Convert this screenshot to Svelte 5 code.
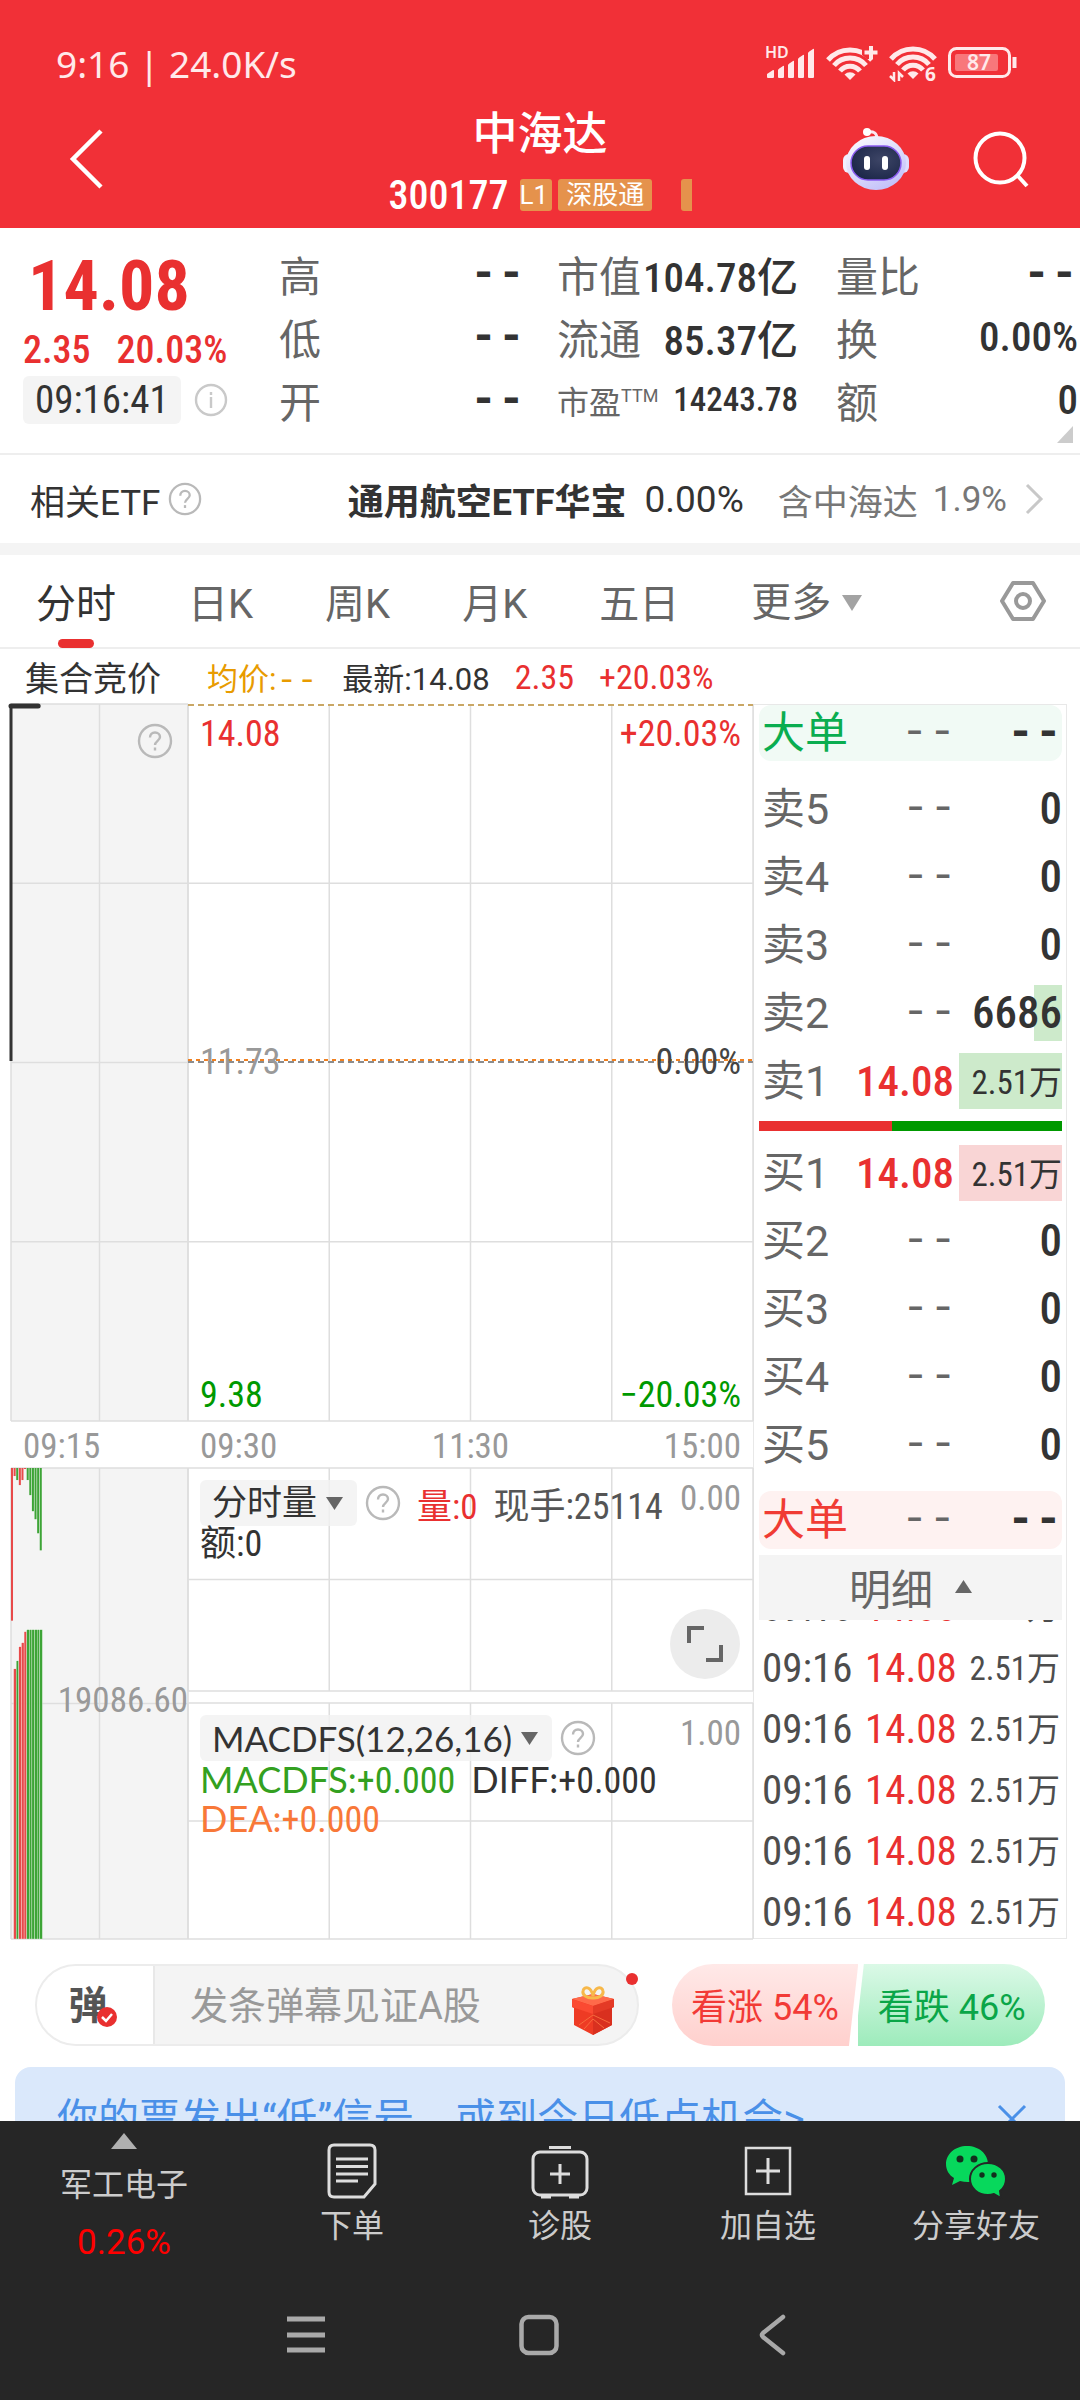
<script>
  const stats = [
    [['高', '--'], ['低', '--'], ['开', '--']],
    [['市值', '104.78亿'], ['流通', '85.37亿'], ['市盈', '14243.78', 'TTM']],
    [['量比', '--'], ['换', '0.00%'], ['额', '0']],
  ];
  const tabs = ['分时', '日K', '周K', '月K', '五日'];
  const sells = [
    { name: '卖5', price: '--', qty: '0', depth: 0 },
    { name: '卖4', price: '--', qty: '0', depth: 0 },
    { name: '卖3', price: '--', qty: '0', depth: 0 },
    { name: '卖2', price: '--', qty: '6686', depth: 27 },
    { name: '卖1', price: '14.08', qty: '2.51万', depth: 100 },
  ];
  const buys = [
    { name: '买1', price: '14.08', qty: '2.51万', depth: 100 },
    { name: '买2', price: '--', qty: '0', depth: 0 },
    { name: '买3', price: '--', qty: '0', depth: 0 },
    { name: '买4', price: '--', qty: '0', depth: 0 },
    { name: '买5', price: '--', qty: '0', depth: 0 },
  ];
  const ticks = Array.from({ length: 6 }, () => ['09:16', '14.08', '2.51万']);

  const R = '#e84a4a';
  const G = '#3da436';
  const unmatched = [[R, 152], [R, 8], [G, 12], [R, 17], [R, 12], [R, 1], [G, 12], [G, 27], [G, 43], [G, 51], [G, 65], [G, 82]];
  const matched = [[R, 201], [G, 209], [R, 223], [R, 227], [R, 238], [G, 240], [G, 240], [G, 240], [G, 240], [G, 240], [G, 240]].map(
    ([c, h]) => [c, h + 68]
  );
</script>

{#snippet lines(vs, hs)}
  <svg class="lines" viewBox="0 0 100 100" preserveAspectRatio="none" aria-hidden="true">
    {#each vs as x}<line x1={x} x2={x} y1="0" y2="100" />{/each}
    {#each hs as y}<line x1="0" x2="100" y1={y} y2={y} />{/each}
  </svg>
{/snippet}

{#snippet help(size)}
  <svg width={size} height={size} viewBox="0 0 36 36" fill="none" stroke="#b9b9b9" stroke-width="2.4" aria-hidden="true">
    <circle cx="18" cy="18" r="16" />
    <path d="M13 14.5c0-3 2-5 5-5s5 2 5 4.6c0 3.600-5 4-5 8" />
    <path d="M18 24.500v3" />
  </svg>
{/snippet}

{#snippet wifi()}
  <g fill="none" stroke="#ffe9ea" stroke-width="5">
    <path d="M2 15A29 29 0 0 1 46 15" />
    <path d="M8 20.500A21 21 0 0 1 40 20.500" />
    <path d="M14 26A13 13 0 0 1 34 26" />
  </g>
  <path d="M18.500 29.500a8 8 0 0 1 11 0L24 35z" fill="#ffe9ea" />
{/snippet}

{#snippet quotes(rows, side)}
  <table class="rows {side}">
    <tbody>
      {#each rows as row}
        <tr>
          <th scope="row">{row.name}</th>
          <td class="price" class:up={row.price !== '--'} class:dash={row.price === '--'}>{row.price}</td>
          <td class="qty" class:small={row.qty.includes('万')}>
            {#if row.depth}<i class="depth" style="width: {row.depth}%"></i>{/if}
            <span>{row.qty}</span>
          </td>
        </tr>
      {/each}
    </tbody>
  </table>
{/snippet}

<div class="app">
  <header>
    <div class="status">
      <span class="clock">9:16 | 24.0K/s</span>
      <svg class="signal" width="50" height="36" viewBox="0 0 50 36" fill="#ffe9ea" aria-hidden="true">
        <text x="0" y="13" class="hd">HD</text>
        <path d="M2 29l6-4q1-.5 1 1v6q0 1-1 1H3q-1 0-1-1zM13 25q0-1 5-4 1-.5 1 .5V32q0 1-1 1h-4q-1 0-1-1zM23 20q0-1 5-4 1-.5 1 .5V32q0 1-1 1h-4q-1 0-1-1zM33 14q0-1 5-4 1-.5 1 .5V32q0 1-1 1h-4q-1 0-1-1zM43 8q0-1 5-4 1-.5 1 .5V32q0 1-1 1h-4q-1 0-1-1z" />
      </svg>
      <svg width="52" height="36" viewBox="0 0 52 36" aria-hidden="true">
        {@render wifi()}
        <path d="M36 -2h18v16H41L36 10z" fill="#f13037" />
        <path d="M45 1v13M38.500 7.500h13" stroke="#ffe9ea" stroke-width="4" />
      </svg>
      <svg width="48" height="38" viewBox="0 0 48 38" aria-hidden="true">
        {@render wifi()}
        <path d="M0 26h14v12H0zM36 24h12v14H36z" fill="#f13037" />
        <path d="M5 28v8l-4-4M10 37v-8l4 4" fill="none" stroke="#ffe9ea" stroke-width="2.500" />
        <text x="36" y="37" class="six">6</text>
      </svg>
      <svg width="70" height="32" viewBox="0 0 70 32" aria-hidden="true">
        <rect x="1.500" y="1.500" width="60" height="28" rx="7" fill="none" stroke="#ffe9ea" stroke-width="3" />
        <rect x="7" y="7" width="43" height="17" rx="2" fill="#f8777b" />
        <path d="M66.500 10v11" stroke="#ffe9ea" stroke-width="4" />
        <text x="31" y="23" text-anchor="middle" class="charge">87</text>
      </svg>
    </div>
    <div class="titlebar">
      <button class="back" aria-label="返回">
        <svg width="40" height="60" viewBox="0 0 40 60" fill="none" stroke="#fff" stroke-width="4.500"><path d="M35 2L7 30l28 28" /></svg>
      </button>
      <div class="title">
        <h1>中海达</h1>
        <div class="code">
          <span class="num">300177</span>
          <div class="badges"><b class="cut">L1</b><b>深股通</b><b class="last"></b></div>
        </div>
      </div>
      <div class="actions">
        <button aria-label="智能助手">
          <svg width="68" height="64" viewBox="0 0 68 64">
            <defs>
              <linearGradient id="shell" x1="0" y1="0" x2="0.600" y2="1"><stop offset="0" stop-color="#fff" /><stop offset="1" stop-color="#c4c2fa" /></linearGradient>
              <radialGradient id="face" cx="0.600" cy="0.400" r="0.700"><stop offset="0" stop-color="#3d4566" /><stop offset="1" stop-color="#1a2547" /></radialGradient>
            </defs>
            <path d="M25 5c7-1 10 1 10 7" fill="none" stroke="#fbe9f2" stroke-width="3" />
            <circle cx="25" cy="5" r="4" fill="#fff" />
            <rect x="1" y="27" width="12" height="19" rx="6" fill="#f1efff" />
            <rect x="55" y="27" width="12" height="19" rx="6" fill="#dddcfd" />
            <ellipse cx="34" cy="36" rx="30" ry="27" fill="url(#shell)" />
            <rect x="9" y="19" width="50" height="34" rx="17" fill="url(#face)" stroke="#8a5cf0" stroke-width="1.500" />
            <rect x="22" y="29" width="6" height="14" rx="3" fill="#fff" />
            <rect x="40" y="29" width="6" height="14" rx="3" fill="#fff" />
          </svg>
        </button>
        <button aria-label="搜索">
          <svg width="58" height="58" viewBox="0 0 58 58" fill="none" stroke="#fff" stroke-width="4"><circle cx="28" cy="28" r="24.500" /><path d="M45 45l10 11" /></svg>
        </button>
      </div>
    </div>
  </header>

  <main>
    <section class="quote">
      <div class="last-price">
        <strong class="num">14.08</strong>
        <p class="num"><span>2.35</span><span>20.03%</span></p>
        <div class="stamp">
          <time class="num">09:16:41</time>
          <svg width="34" height="34" viewBox="0 0 34 34" fill="none" stroke="#c9c9c9" stroke-width="2.400" aria-hidden="true"><circle cx="17" cy="17" r="15" /><path d="M17 14v11M17 9v3" /></svg>
        </div>
      </div>
      {#each stats as column}
        <dl>
          {#each column as [label, value, sup]}
            <div class:compact={sup}>
              <dt>{label}{#if sup}<sup>{sup}</sup>{/if}</dt>
              <dd class="num" class:dash={value === '--'}>{value}</dd>
            </div>
          {/each}
        </dl>
      {/each}
      <i class="corner"></i>
    </section>

    <section class="etf">
      <span class="etf-label">相关ETF {@render help(34)}</span>
      <a href="#etf"><b>通用航空ETF华宝</b><span>0.00%</span><em>含中海达</em><em>1.9%</em>
        <svg width="20" height="34" viewBox="0 0 20 34" fill="none" stroke="#c8c8c8" stroke-width="3" aria-hidden="true"><path d="M3 3l14 14L3 31" /></svg>
      </a>
    </section>

    <nav class="tabs">
      {#each tabs as tab, i}
        <button class:active={i === 0}>{tab}</button>
      {/each}
      <label class="more">
        <select aria-label="更多周期"><option>更多</option></select>
        <svg width="22" height="16" viewBox="0 0 22 16" fill="#a3a3a3" aria-hidden="true"><path d="M1 0h20L11 16z" /></svg>
      </label>
      <button class="settings" aria-label="设置">
        <svg width="46" height="44" viewBox="0 0 46 44" fill="none" stroke="#999" stroke-width="4" stroke-linejoin="round"><path d="M13 4h20l11 18-11 18H13L2 22z" /><circle cx="23" cy="22" r="7" /></svg>
      </button>
    </nav>

    <div class="summary">
      <span class="phase">集合竞价</span><span class="avg">均价:<i class="dash">--</i></span><span>最新:14.08</span><span class="num up">2.35</span><span class="num up">+20.03%</span>
    </div>

    <div class="board">
      <div class="chart">
        <div class="auction">
          <div class="panel price-panel shade">
            {@render lines([0, 50, 100], [0, 25, 50, 75, 100])}
            <svg class="trace" viewBox="0 0 176 717" preserveAspectRatio="none" fill="none" stroke="#333" aria-hidden="true">
              <path d="M0 2V357" stroke-width="3" />
              <path d="M0 2H27" stroke-width="5" stroke-linecap="round" />
            </svg>
            <div class="help-slot">{@render help(36)}</div>
          </div>
          <div class="axis first"><span>09:15</span></div>
          <div class="panel shade volume">
            {@render lines([0, 50, 100], [0, 50, 100])}
            <svg class="trace" viewBox="0 0 176 469" preserveAspectRatio="none" aria-hidden="true">
              {#each unmatched as [color, h], i}<rect x={i * 2.6} y="0" width="2" height={h} fill={color} />{/each}
              {#each matched as [color, h], i}<rect x={2.6 + i * 2.6} y={469 - h} width="2.600" height={h} fill={color} stroke="#fff" stroke-width="0.300" />{/each}
            </svg>
            <span class="num amount">19086.60</span>
          </div>
        </div>
        <div class="session">
          <div class="panel price-panel labels">
            {@render lines([0, 25, 50, 75, 100], [25, 75, 100])}
            <svg class="lines" viewBox="0 0 100 717" preserveAspectRatio="none" aria-hidden="true">
              <line class="top" x1="0" x2="100" y1="1" y2="1" />
              <line class="avgline" x1="0" x2="100" y1="356" y2="356" />
              <line class="midline" x1="0" x2="100" y1="358" y2="358" />
            </svg>
            <div class="up"><span>14.08</span><span>+20.03%</span></div>
            <div class="flat"><span>11.73</span><span class="zero">0.00%</span></div>
            <div class="down"><span>9.38</span><span>−20.03%</span></div>
          </div>
          <div class="axis"><span>09:30</span><span>11:30</span><span>15:00</span></div>
          <div class="panel volume-panel">
            {@render lines([0, 25, 50, 75, 100], [0, 50, 100])}
            <div class="indicator">
              <label class="pick"><select aria-label="成交量指标"><option>分时量</option></select>
                <svg width="17" height="13" viewBox="0 0 17 13" fill="#666" aria-hidden="true"><path d="M0 0h17L8.500 13z" /></svg></label>
              {@render help(36)}
              <span class="up">量:0</span><span class="hand">现手:25114</span>
              <span class="scale">0.00</span>
            </div>
            <div class="values"><span>额:0</span></div>
            <button class="expand" aria-label="全屏">
              <svg width="40" height="38" viewBox="0 0 40 38" fill="none" stroke="#666" stroke-width="4"><path d="M4 18V3h15M36 20v15H21" /></svg>
            </button>
          </div>
          <div class="panel macd-panel">
            {@render lines([0, 25, 50, 75, 100], [0, 50, 100])}
            <div class="indicator macd">
              <label class="pick"><select aria-label="技术指标"><option>MACDFS(12,26,16)</option></select>
                <svg width="17" height="13" viewBox="0 0 17 13" fill="#666" aria-hidden="true"><path d="M0 0h17L8.500 13z" /></svg></label>
              {@render help(36)}
              <span class="scale">1.00</span>
            </div>
            <div class="values"><span class="green"><b>MACDFS:</b>+0.000</span><span><b>DIFF:</b>+0.000</span></div>
            <div class="values"><span class="orange"><b>DEA:</b>+0.000</span></div>
          </div>
        </div>
      </div>

      <aside class="book">
        <div class="big sell"><b>大单</b><span class="dash">--</span><span class="dash dark">--</span></div>
        {@render quotes(sells, 'ask')}
        <div class="ratio"><i style="width: 44%"></i></div>
        {@render quotes(buys, 'bid')}
        <div class="big buy"><b>大单</b><span class="dash">--</span><span class="dash dark">--</span></div>
        <button class="detail">明细 <svg width="17" height="13" viewBox="0 0 17 13" fill="#666" aria-hidden="true"><path d="M0 13h17L8.500 0z" /></svg></button>
        <div class="ticks">
          <table>
            <tbody>
              {#each ticks as [t, p, q]}
                <tr><td>{t}</td><td class="up">{p}</td><td class="q">{q}</td></tr>
              {/each}
            </tbody>
          </table>
        </div>
      </aside>
    </div>

    <div class="social">
      <div class="comment">
        <button class="danmu" aria-label="弹幕开关">弹
          <svg width="20" height="20" viewBox="0 0 20 20" aria-hidden="true"><circle cx="10" cy="10" r="10" fill="#e93030" /><path d="M5 10l4 4 6-7" fill="none" stroke="#fff" stroke-width="2.500" /></svg>
        </button>
        <input type="text" placeholder="发条弹幕见证A股" aria-label="弹幕" />
        <button class="gift" aria-label="礼物">
          <svg width="48" height="52" viewBox="0 0 48 52">
            <path d="M3 16l21-5 21 5v8l-2 1v17L24 52 5 42V25l-2-1z" fill="#ee3b24" />
            <path d="M24 24l19-5v23L24 52z" fill="#d9301f" />
            <path d="M3 16l21-5 21 5-21 7z" fill="#ff6a4a" />
            <path d="M3 16l21 7v8L3 24z" fill="#fb4a32" />
            <path d="M45 16l-21 7v8l21-7z" fill="#e43a26" />
            <path d="M24 32L10 42M24 36l-9 10M24 36l11 9M24 32l17 8" stroke="#f76a3c" stroke-width="1" />
            <path d="M23 15c-5 0-10-3-9-7 1-5 8-5 10 5 2-10 9-10 10-5 1 4-4 7-9 7z" fill="none" stroke="#f7b84a" stroke-width="3" />
          </svg>
        </button>
        <i class="dot"></i>
      </div>
      <div class="vote">
        <button class="rise">看涨 54%</button><button class="fall">看跌 46%</button>
      </div>
    </div>

    <div class="banner">
      <a href="#signal">你的票发出“低”信号，或到今日低点机会&gt;</a>
      <button aria-label="关闭"><svg width="30" height="30" viewBox="0 0 30 30" fill="none" stroke="#4a90e8" stroke-width="3"><path d="M2 2l26 26M28 2L2 28" /></svg></button>
    </div>
  </main>

  <footer>
    <nav class="toolbar">
      <a class="index" href="#index">
        <svg width="26" height="16" viewBox="0 0 26 16" fill="#b0b0b0" aria-hidden="true"><path d="M0 16h26L13 0z" /></svg>
        <span>军工电子</span><em>0.26%</em>
      </a>
      <a href="#order">
        <svg width="50" height="56" viewBox="0 0 50 56" fill="none" stroke="#ddd" stroke-width="3"><path d="M7 2h36q5 0 5 5v34L37 54H7q-5 0-5-5V7q0-5 5-5z" /><path d="M9 16h32M9 23.500h32M9 31h32M9 38h22" /></svg>
        <span>下单</span>
      </a>
      <a href="#diagnose">
        <svg width="58" height="56" viewBox="0 0 58 56" fill="none" stroke="#ddd" stroke-width="3"><path d="M18 4.500h22" /><rect x="2" y="9" width="54" height="43" rx="7" /><path d="M29 21v20M19 31h20" /><path d="M10 53.500h10M38 53.500h10" stroke-width="4" /></svg>
        <span>诊股</span>
      </a>
      <a href="#watch">
        <svg width="48" height="56" viewBox="0 0 48 56" fill="none" stroke="#ddd" stroke-width="2.500"><path d="M2 5h44v46H2z" /><path d="M24 15v26M12 28h24" stroke-width="3" /></svg>
        <span>加自选</span>
      </a>
      <a href="#share">
        <svg width="62" height="56" viewBox="0 0 62 56">
          <path d="M22 3C10 3 1 11 1 21c0 6 3 11 8 14l-2 7 8-4q4 1 8 1C34 39 43 31 43 21S34 3 22 3z" fill="#07d85c" />
          <path d="M43 20c-10 0-18 7-18 16s8 16 18 16q3 0 6-1l7 4-1-7c4-3 6-7 6-12 0-9-8-16-18-16z" fill="#07d85c" stroke="#262626" stroke-width="2" />
          <g fill="#12301d"><circle cx="15" cy="16" r="3.500" /><circle cx="29" cy="16" r="3.500" /><circle cx="37" cy="32" r="2.700" /><circle cx="49" cy="32" r="2.700" /></g>
        </svg>
        <span>分享好友</span>
      </a>
    </nav>
    <nav class="system">
      <button aria-label="任务"><svg width="40" height="42" viewBox="0 0 40 42" stroke="#a9a9a9" stroke-width="5"><path d="M1 5h38M1 21h38M1 36h38" /></svg></button>
      <button aria-label="主页"><svg width="40" height="42" viewBox="0 0 40 42" fill="none" stroke="#a9a9a9" stroke-width="4.500"><rect x="2.500" y="3" width="35" height="36" rx="7" /></svg></button>
      <button aria-label="后退"><svg width="40" height="42" viewBox="0 0 40 42" fill="none" stroke="#a9a9a9" stroke-width="4.500" stroke-linecap="round" stroke-linejoin="round"><path d="M31 3L11 19q-2 2 0 4l20 16" /></svg></button>
    </nav>
  </footer>
</div>

<style>
  :global(body) { background: #fff; }
  .app {
    --num: 'Liberation Sans Narrow', 'Roboto Condensed', Roboto, 'Noto Sans CJK SC', sans-serif;
    height: 100vh;
    display: flex;
    flex-direction: column;
    overflow: hidden;
    color: #333;
    font-family: Roboto, 'Noto Sans CJK SC', sans-serif;
    font-size: 35px;
  }
  * { box-sizing: border-box; }
  svg { display: block; flex: none; }
  button, select, input { font: inherit; color: inherit; background: none; border: 0; padding: 0; margin: 0; appearance: none; outline: none; }
  a { color: inherit; text-decoration: none; }
  em, i { font-style: normal; }
  p, h1, dl, dd { margin: 0; }
  .num { font-family: var(--num); }
  .dash { font-family: 'Liberation Mono', monospace; }
  .up { color: #e93030; }

  header { background: #f13037; color: #fff; height: 228px; flex: none; display: flex; flex-direction: column; }
  .status { display: flex; align-items: center; gap: 11px; padding: 42px 62px 0 56px; height: 84px; color: #ffe9ea; }
  .clock { font-size: 37px; margin-right: auto; font-family: 'Noto Sans', sans-serif; }
  .signal { overflow: visible; }
  .hd { font: 600 16px 'Noto Sans', sans-serif; }
  .six { font: 700 19px 'Noto Sans', sans-serif; fill: #ffe9ea; }
  .charge { font: 600 21px 'Noto Sans', sans-serif; fill: #ffe9ea; }
  .titlebar { flex: 1; display: grid; grid-template-columns: 1fr auto 1fr; align-items: center; padding: 6px 50px 0; }
  .back { margin-left: 16px; justify-self: start; }
  .title { text-align: center; padding-top: 12px; }
  h1 { font-size: 45px; line-height: 60px; font-weight: 500; }
  .code { display: flex; align-items: center; gap: 11px; height: 60px; }
  .code .num { font-size: 40px; font-weight: 500; }
  .badges { display: flex; width: 172px; overflow: hidden; gap: 6px; }
  .badges b { font-weight: 400; font-size: 26px; line-height: 32px; padding: 0 8px; background: #e5924c; border-radius: 3px; white-space: nowrap; }
  .badges .cut { padding: 0 4px 0 0; }
  .badges .last { margin-left: 23px; flex: none; width: 16px; }
  .actions { display: flex; justify-content: flex-end; align-items: center; gap: 62px; }

  main { flex: 1; min-height: 0; overflow: hidden; }
  .quote { display: grid; grid-template-columns: 218fr 240fr 241fr 242fr; gap: 38px; padding: 18px 2px 0 23px; height: 227px; border-bottom: 2px solid #eee; position: relative; }
  .last-price { color: #e93030; }
  .last-price strong { display: block; font-size: 70px; line-height: 80px; padding-left: 5px; }
  .last-price p { display: flex; gap: 26px; font-size: 38px; line-height: 48px; white-space: nowrap; font-weight: 500; }
  .stamp { display: flex; align-items: center; gap: 13px; margin-top: 2px; }
  time { background: #f4f4f4; border-radius: 6px; color: #333; font-size: 39px; line-height: 48px; padding: 0 12px; }
  dl { margin-top: -4px; }
  dl > div { display: flex; justify-content: space-between; align-items: center; height: 63px; white-space: nowrap; }
  dt { color: #666; font-size: 42px; }
  dd { font-size: 41px; font-weight: 500; }
  dd.dash { font-size: 46px; font-weight: 700; margin-right: -6px; }
  dl:last-of-type .dash { margin-right: 0; }
  .compact dt { font-size: 32px; }
  .compact dd { font-size: 33px; }
  sup { font-size: 18px; line-height: 0; }
  .corner { position: absolute; right: 7px; bottom: 10px; border-left: 16px solid transparent; border-bottom: 17px solid #ccc; }

  .etf { display: flex; justify-content: space-between; align-items: center; height: 100px; padding: 0 36px 0 30px; border-bottom: 12px solid #f4f4f4; white-space: nowrap; }
  .etf-label { display: flex; align-items: center; gap: 8px; }
  .etf a { display: flex; align-items: center; }
  .etf b { font-size: 36px; }
  .etf a span { margin-left: 18px; font-size: 37px; }
  .etf em { color: #777; margin-left: 15px; }
  .etf span + em { margin-left: 34px; }
  .etf a svg { margin-left: 17px; }

  .tabs { display: flex; align-items: center; height: 94px; padding: 0 34px 0 36px; gap: 72px; border-bottom: 2px solid #eee; color: #666; font-size: 40px; white-space: nowrap; }
  .tabs button { height: 92px; }
  .tabs .active { color: #333; position: relative; }
  .tabs .active::after { content: ''; position: absolute; left: 22px; bottom: -1px; width: 36px; height: 9px; border-radius: 5px; background: #e93030; }
  .more { display: flex; align-items: center; gap: 10px; padding-top: 3px; }
  .tabs .settings { margin-left: auto; display: flex; align-items: center; }

  .summary { display: flex; align-items: center; height: 55px; padding: 0 25px; gap: 25px; font-size: 31px; white-space: nowrap; }
  .phase { font-size: 34px; margin-right: 21px; }
  .avg { color: #e89b00; }
  .avg .dash { font-size: 34px; line-height: 30px; }
  .summary .up { font-size: 34px; }

  .board { display: grid; grid-template-columns: 742fr 314fr; padding: 0 13px 0 11px; }
  .chart { display: flex; min-width: 0; }
  .auction { flex: 177; min-width: 0; display: flex; flex-direction: column; }
  .session { flex: 565; min-width: 0; display: flex; flex-direction: column; font-family: var(--num); }
  .panel { position: relative; }
  .shade { background: #f4f4f4; }
  .price-panel { height: 717px; }
  .lines, .trace { position: absolute; inset: 0; width: 100%; height: 100%; overflow: visible; }
  .lines line { stroke: #dedede; stroke-width: 1.500px; vector-effect: non-scaling-stroke; }
  .lines .top { stroke: #c9a765; stroke-width: 2px; stroke-dasharray: 6 4; }
  .lines .avgline { stroke: #f08020; stroke-width: 2px; stroke-dasharray: 4 4; }
  .lines .midline { stroke: #8d8d8d; stroke-width: 2px; stroke-dasharray: 6 4; }
  .help-slot { position: relative; display: flex; justify-content: flex-end; padding: 19px 15px; }
  .axis { height: 47px; display: flex; align-items: center; justify-content: space-between; padding: 3px 12px 0; color: #999; font: 35px var(--num); }
  .volume { flex: 1; }
  .amount { position: absolute; right: 0; top: 50%; line-height: 40px; margin-top: -23px; color: #999; font-size: 35px; }
  .labels { display: flex; flex-direction: column; justify-content: space-between; padding: 10px 12px 6px; font-size: 36px; line-height: 40px; }
  .labels > div { position: relative; display: flex; justify-content: space-between; }
  .labels .flat { color: #999; margin-bottom: 6px; }
  .labels .zero { color: #444; }
  .down { color: #090; }
  .volume-panel { height: 223px; padding: 12px 12px 10px; margin-bottom: 12px; }
  .macd-panel { flex: 1; padding: 12px 12px 10px; }
  .indicator { position: relative; display: flex; align-items: center; gap: 16px; height: 46px; white-space: nowrap; }
  .pick { display: flex; align-items: center; gap: 8px; height: 46px; background: #f1f1f1cc; border-radius: 6px; padding: 0 14px 0 12px; margin-right: -8px; }
  .scale { margin-left: auto; color: #999; align-self: flex-start; line-height: 38px; }
  .hand { color: #555; font-size: 36px; }
  .values { position: relative; display: flex; gap: 16px; line-height: 37px; white-space: nowrap; font-size: 36px; }
  .values b { font-weight: 400; font-family: Lato, sans-serif; }
  .macd .pick { font-family: Lato, sans-serif; }
  .green { color: #33a020; }
  .orange { color: #f87838; }
  .expand { position: absolute; right: 13px; bottom: 12px; width: 70px; height: 70px; border-radius: 50%; background: #ececec; display: grid; place-items: center; }

  .book { border: 1px solid #e8e8e8; padding: 0 4px 0 5px; height: 1235px; display: flex; flex-direction: column; min-width: 0; }
  .big { display: grid; grid-template-columns: 90fr 106fr 107fr; align-items: center; flex: none; padding: 0 0 0 3px; border-radius: 12px; font-size: 43px; line-height: 56px; }
  .big b { font-weight: 400; }
  .big span { text-align: right; color: #666; font-size: 46px; }
  .big .dark { color: #333; font-weight: 700; }
  .sell { background: #f1faf5; color: #0aad50; height: 56px; margin-bottom: 14px; }
  .buy { background: #fef2f1; color: #f03c34; height: 58px; margin: 12px 0 6px; }
  table { width: 100%; border-collapse: collapse; table-layout: fixed; }
  .rows th { width: 28%; text-align: left; font-weight: 400; color: #666; padding-left: 3px; font-size: 43px; }
  .rows tr { height: 68px; }
  th, td { padding: 0; white-space: nowrap; line-height: 56px; }
  .price { text-align: right; font-size: 46px; color: #666; width: 38%; padding-right: 2px; }
  .price.up { color: #e93030; font-family: var(--num); font-weight: 500; font-size: 43px; padding-right: 5px; }
  .qty { position: relative; text-align: right; font-family: var(--num); font-size: 45px; font-weight: 500; }
  .qty span { position: relative; }
  .qty.small { font-size: 33px; font-weight: 400; padding-top: 4px; }
  .depth { position: absolute; right: 0; top: 6px; height: 56px; }
  .ask .depth { background: #cdeacb; }
  .bid .depth { background: #f9d5d5; }
  .ratio { height: 10px; background: #090; margin: 6px 0 8px; flex: none; }
  .ratio i { display: block; height: 100%; background: #e93030; }
  .detail { height: 65px; flex: none; background: #f4f4f4; color: #666; font-size: 42px; display: flex; align-items: center; justify-content: center; gap: 22px; padding-bottom: 2px; }
  .ticks { flex: 1; min-height: 0; overflow: hidden; }
  .ticks table { margin-top: -44px; font-family: var(--num); font-size: 41px; color: #4d4d4d; }
  .ticks tr { height: 61px; }
  .ticks td { width: 34%; padding-left: 3px; }
  .ticks .q { width: 32%; font-size: 33px; text-align: right; padding: 3px 2px 0 0; }

  .social { display: flex; gap: 33px; padding: 25px 35px 21px; }
  .comment { position: relative; flex: 602; display: flex; height: 82px; border: 2px solid #ececec; border-radius: 41px; background: #f4f4f4; min-width: 0; }
  .danmu { position: relative; width: 118px; background: #fff; border-radius: 41px 0 0 41px; border-right: 2px solid #e8e8e8; font-weight: 700; font-size: 39px; color: #555; text-align: center; padding: 0 14px 6px 0; }
  .danmu svg { position: absolute; left: 60px; bottom: 17px; }
  .comment input { flex: 1; min-width: 0; padding: 2px 0 0 35px; font-size: 38px; }
  .comment input::placeholder { color: #999; opacity: 1; }
  .gift { padding: 8px 20px 0 0; }
  .dot { position: absolute; right: -1px; top: 7px; width: 12px; height: 12px; border-radius: 50%; background: #e93030; }
  .vote { flex: 375; display: flex; height: 82px; border-radius: 41px; overflow: hidden; font-size: 36px; white-space: nowrap; }
  .vote button { flex: 1; padding-bottom: 3px; }
  .rise { background: linear-gradient(#ffe9e8, #ffd0cd); color: #f23a36; clip-path: polygon(0 0, 100% 0, 95% 100%, 0 100%); }
  .fall { background: linear-gradient(#dbf9e7, #9debbb); color: #0aa648; clip-path: polygon(3% 0, 100% 0, 100% 100%, -2% 100%); }

  .banner { display: flex; justify-content: space-between; margin: 0 15px; padding: 25px 38px 0 42px; height: 110px; background: #dae8fb; border-radius: 16px; color: #4a90e8; font-size: 41px; line-height: 54px; white-space: nowrap; }
  .banner button { align-self: flex-start; padding-top: 12px; }

  footer { flex: none; height: 279px; background: #262626; color: #ccc; }
  .toolbar { display: flex; font-size: 32px; text-align: center; height: 150px; }
  .toolbar a { flex: 208; display: flex; flex-direction: column; align-items: center; padding-top: 22px; line-height: 40px; gap: 7px; }
  .toolbar .index { flex: 248; padding-top: 12px; gap: 16px; }
  .index em { color: #f00; line-height: 44px; font-size: 35px; }
  .system { display: flex; justify-content: center; gap: 193px; padding: 43px 2px 0 0; }
</style>
